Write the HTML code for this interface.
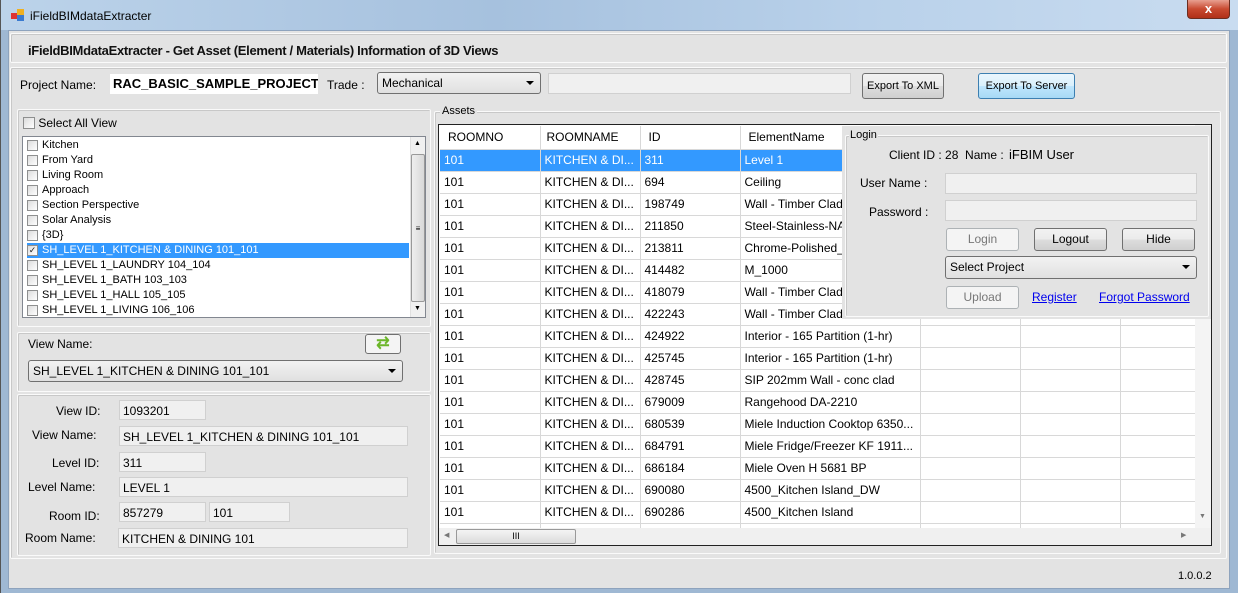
<!DOCTYPE html>
<html><head><style>
*{box-sizing:border-box;margin:0;padding:0}
body{width:1238px;height:593px;overflow:hidden;background:#9fb8d3;font-family:"Liberation Sans",sans-serif;font-size:12px;color:#000;position:relative}
.a{position:absolute}
.title{left:0;top:0;width:1238px;height:30px;background:linear-gradient(90deg,#bcd3ea,#a6c1de 40%,#b9d1ea 70%,#c9dcf0)}
.win{left:8px;top:30px;width:1222px;height:559px;background:#e3e3e3;border:1px solid #8ea3bd}
.grp{border:1px solid #fafafa;box-shadow:inset 1px 1px 0 #c8c8c8;border-radius:2px}
.tb{background:#f0f0f0;border:1px solid #d0d0d0}
.btn{background:linear-gradient(#f2f2f2,#ebebeb 50%,#dddddd 51%,#cfcfcf);border:1px solid #707070;border-radius:3px;text-align:center;font-size:11px}
.cmb{background:linear-gradient(#f2f2f2,#e0e0e0);border:1px solid #707070;border-radius:3px;padding:3px 4px;font-size:12px}
.arr{position:absolute;right:6px;top:8px;width:0;height:0;border-left:4px solid transparent;border-right:4px solid transparent;border-top:4px solid #000}
.cb{width:12px;height:12px;border:1px solid #8e8f8f;background:linear-gradient(135deg,#dcdcdc,#fff);display:inline-block}
.li{position:absolute;left:4px;height:15px;line-height:15px;font-size:11px;width:382px;padding-left:15px}
.li .cb{position:absolute;left:0;top:2px;width:11px;height:11px}
table{border-collapse:collapse;font-size:12px}
td{height:22px;border-right:1px solid #d8d8d8;border-bottom:1px solid #d8d8d8;padding-left:4px;white-space:nowrap;overflow:hidden;background:#fff}
.lbl{font-size:12px;color:#000}
</style></head><body>
<div class="a title"></div>
<div class="a" style="left:0;top:0;width:1px;height:593px;background:#555"></div>
<div class="a" style="left:11px;top:9px;width:14px;height:12px"><div class="a" style="left:0;top:4px;width:6px;height:6px;background:#d33"></div><div class="a" style="left:6px;top:0;width:7px;height:6px;background:#f0b020"></div><div class="a" style="left:6px;top:6px;width:7px;height:6px;background:#3a7ad0"></div></div>
<div class="a" style="left:30px;top:9px;font-size:12px">iFieldBIMdataExtracter</div>
<div class="a" style="left:1187px;top:0;width:43px;height:19px;background:linear-gradient(#e8a090,#c84a30 50%,#b03018);border:1px solid #6b2d20;border-top:none;border-radius:0 0 4px 4px;color:#fff;text-align:center;font-weight:bold;font-size:13px;line-height:17px">x</div>
<div class="a win"></div>
<div class="a grp" style="left:10px;top:33px;width:1217px;height:30px"></div>
<div class="a" style="left:28px;top:43px;font-size:13px;font-weight:bold;letter-spacing:-0.3px;color:#111">iFieldBIMdataExtracter - Get Asset (Element / Materials) Information of 3D Views</div>
<div class="a grp" style="left:10px;top:67px;width:1217px;height:492px"></div>
<div class="a lbl" style="left:20px;top:78px">Project Name:</div>
<div class="a" style="left:110px;top:74px;width:208px;height:20px;background:#fff;font-weight:bold;font-size:13px;padding:2px 3px;overflow:hidden;white-space:nowrap">RAC_BASIC_SAMPLE_PROJECT</div>
<div class="a lbl" style="left:327px;top:78px">Trade :</div>
<div class="a cmb" style="left:377px;top:72px;width:164px;height:22px">Mechanical<span class="arr"></span></div>
<div class="a tb" style="left:548px;top:73px;width:303px;height:21px"></div>
<div class="a btn" style="left:862px;top:73px;width:82px;height:26px;line-height:24px">Export To XML</div>
<div class="a btn" style="left:978px;top:73px;width:97px;height:26px;line-height:24px;border-color:#3c7fb1;background:linear-gradient(#eaf6fd,#d9f0fc 50%,#bee6fd 51%,#a7d9f5)">Export To Server</div>

<div class="a grp" style="left:17px;top:109px;width:414px;height:218px"></div>
<div class="a" style="left:23px;top:115px"><span class="cb" style="vertical-align:middle"></span> <span style="vertical-align:middle">Select All View</span></div>
<div class="a" style="left:22px;top:136px;width:404px;height:182px;background:#fff;border:1px solid #828790;overflow:hidden">
<div class="li" style="top:1px"><span class="cb"></span>Kitchen</div>
<div class="li" style="top:16px"><span class="cb"></span>From Yard</div>
<div class="li" style="top:31px"><span class="cb"></span>Living Room</div>
<div class="li" style="top:46px"><span class="cb"></span>Approach</div>
<div class="li" style="top:61px"><span class="cb"></span>Section Perspective</div>
<div class="li" style="top:76px"><span class="cb"></span>Solar Analysis</div>
<div class="li" style="top:91px"><span class="cb"></span>{3D}</div>
<div class="li" style="top:106px;background:#3399ff;color:#fff"><span class="cb" style="font-size:9px;color:#222;line-height:9px;text-align:center">✓</span>SH_LEVEL 1_KITCHEN &amp; DINING 101_101</div>
<div class="li" style="top:121px"><span class="cb"></span>SH_LEVEL 1_LAUNDRY 104_104</div>
<div class="li" style="top:136px"><span class="cb"></span>SH_LEVEL 1_BATH 103_103</div>
<div class="li" style="top:151px"><span class="cb"></span>SH_LEVEL 1_HALL 105_105</div>
<div class="li" style="top:166px"><span class="cb"></span>SH_LEVEL 1_LIVING 106_106</div>
<div class="a" style="left:387px;top:0;width:16px;height:180px;background:#f0f0f0;border-left:1px solid #e0e0e0"></div>
<div class="a" style="left:388px;top:17px;width:14px;height:148px;background:linear-gradient(90deg,#eee,#d8d8d8);border:1px solid #999;border-radius:2px;text-align:center;font-size:8px;line-height:148px">≡</div>
<div class="a" style="left:391px;top:3px;font-size:7px">▲</div><div class="a" style="left:391px;top:168px;font-size:7px">▼</div>
</div>

<div class="a grp" style="left:17px;top:332px;width:414px;height:60px"></div>
<div class="a lbl" style="left:28px;top:337px">View Name:</div>
<div class="a btn" style="left:365px;top:334px;width:36px;height:20px;background:#f4f4f4;color:#6cb62a;font-size:16px;line-height:17px;font-weight:bold">⇄</div>
<div class="a cmb" style="left:28px;top:360px;width:375px;height:22px">SH_LEVEL 1_KITCHEN &amp; DINING 101_101<span class="arr"></span></div>

<div class="a grp" style="left:17px;top:394px;width:414px;height:162px"></div>
<div class="a lbl" style="left:56px;top:404px">View ID:</div>
<div class="a tb" style="left:119px;top:400px;width:87px;height:20px;padding:3px 3px">1093201</div>
<div class="a lbl" style="left:32px;top:428px">View Name:</div>
<div class="a tb" style="left:119px;top:426px;width:289px;height:20px;padding:3px 3px">SH_LEVEL 1_KITCHEN &amp; DINING 101_101</div>
<div class="a lbl" style="left:52px;top:456px">Level ID:</div>
<div class="a tb" style="left:119px;top:452px;width:87px;height:20px;padding:3px 3px">311</div>
<div class="a lbl" style="left:28px;top:480px">Level Name:</div>
<div class="a tb" style="left:119px;top:477px;width:289px;height:20px;padding:3px 3px">LEVEL 1</div>
<div class="a lbl" style="left:49px;top:509px">Room ID:</div>
<div class="a tb" style="left:119px;top:502px;width:87px;height:20px;padding:3px 3px">857279</div>
<div class="a tb" style="left:209px;top:502px;width:81px;height:20px;padding:3px 3px">101</div>
<div class="a lbl" style="left:25px;top:531px">Room Name:</div>
<div class="a tb" style="left:118px;top:528px;width:290px;height:20px;padding:3px 3px">KITCHEN &amp; DINING 101</div>

<div class="a grp" style="left:434px;top:111px;width:787px;height:443px"></div>
<div class="a" style="left:440px;top:105px;background:#e3e3e3;padding:0 2px;font-size:11px">Assets</div>
<div class="a" style="left:438px;top:124px;width:774px;height:422px;border:1px solid #222;background:#fff;overflow:hidden">
<table style="position:absolute;left:1px;top:1px;width:756px;table-layout:fixed">
<colgroup><col style="width:100px"><col style="width:100px"><col style="width:100px"><col style="width:180px"><col style="width:100px"><col style="width:100px"><col style="width:76px"></colgroup>
<tr><td style="height:23px;padding-left:8px">ROOMNO</td><td style="padding-left:6px">ROOMNAME</td><td style="padding-left:8px">ID</td><td style="padding-left:8px">ElementName</td><td></td><td></td><td></td></tr>
<tr style="color:#fff"><td style="background:#3399ff">101</td><td style="background:#3399ff">KITCHEN &amp; DI...</td><td style="background:#3399ff">311</td><td style="background:#3399ff">Level 1</td><td></td><td></td><td></td></tr>
<tr><td>101</td><td>KITCHEN &amp; DI...</td><td>694</td><td>Ceiling</td><td></td><td></td><td></td></tr>
<tr><td>101</td><td>KITCHEN &amp; DI...</td><td>198749</td><td>Wall - Timber Clad</td><td></td><td></td><td></td></tr>
<tr><td>101</td><td>KITCHEN &amp; DI...</td><td>211850</td><td>Steel-Stainless-NA</td><td></td><td></td><td></td></tr>
<tr><td>101</td><td>KITCHEN &amp; DI...</td><td>213811</td><td>Chrome-Polished_</td><td></td><td></td><td></td></tr>
<tr><td>101</td><td>KITCHEN &amp; DI...</td><td>414482</td><td>M_1000</td><td></td><td></td><td></td></tr>
<tr><td>101</td><td>KITCHEN &amp; DI...</td><td>418079</td><td>Wall - Timber Clad</td><td></td><td></td><td></td></tr>
<tr><td>101</td><td>KITCHEN &amp; DI...</td><td>422243</td><td>Wall - Timber Clad</td><td></td><td></td><td></td></tr>
<tr><td>101</td><td>KITCHEN &amp; DI...</td><td>424922</td><td>Interior - 165 Partition (1-hr)</td><td></td><td></td><td></td></tr>
<tr><td>101</td><td>KITCHEN &amp; DI...</td><td>425745</td><td>Interior - 165 Partition (1-hr)</td><td></td><td></td><td></td></tr>
<tr><td>101</td><td>KITCHEN &amp; DI...</td><td>428745</td><td>SIP 202mm Wall - conc clad</td><td></td><td></td><td></td></tr>
<tr><td>101</td><td>KITCHEN &amp; DI...</td><td>679009</td><td>Rangehood DA-2210</td><td></td><td></td><td></td></tr>
<tr><td>101</td><td>KITCHEN &amp; DI...</td><td>680539</td><td>Miele Induction Cooktop 6350...</td><td></td><td></td><td></td></tr>
<tr><td>101</td><td>KITCHEN &amp; DI...</td><td>684791</td><td>Miele Fridge/Freezer KF 1911...</td><td></td><td></td><td></td></tr>
<tr><td>101</td><td>KITCHEN &amp; DI...</td><td>686184</td><td>Miele Oven H 5681 BP</td><td></td><td></td><td></td></tr>
<tr><td>101</td><td>KITCHEN &amp; DI...</td><td>690080</td><td>4500_Kitchen Island_DW</td><td></td><td></td><td></td></tr>
<tr><td>101</td><td>KITCHEN &amp; DI...</td><td>690286</td><td>4500_Kitchen Island</td><td></td><td></td><td></td></tr>
<tr><td></td><td></td><td></td><td></td><td></td><td></td><td></td></tr>
</table>
<div class="a" style="left:756px;top:0;width:17px;height:420px;background:#f4f4f4"></div>
<div class="a" style="left:760px;top:388px;font-size:7px;color:#777">▼</div>
<div class="a" style="left:0;top:403px;width:773px;height:17px;background:#f0f0f0"></div>
<div class="a" style="left:17px;top:404px;width:120px;height:15px;background:linear-gradient(#f4f4f4,#dcdcdc);border:1px solid #999;border-radius:2px;text-align:center;font-size:9px;line-height:13px">III</div>
<div class="a" style="left:5px;top:406px;font-size:7px;color:#777">◀</div>
<div class="a" style="left:742px;top:406px;font-size:7px;color:#777">▶</div>
</div>

<div class="a" style="left:842px;top:126px;width:369px;height:193px;background:#e3e3e3"></div>
<div class="a grp" style="left:845px;top:135px;width:364px;height:182px"></div>
<div class="a" style="left:849px;top:129px;background:#e3e3e3;padding:0 1px;font-size:11px">Login</div>
<div class="a lbl" style="left:889px;top:148px">Client ID : 28&nbsp; Name :</div>
<div class="a" style="left:1009px;top:147px;font-size:13px">iFBIM User</div>
<div class="a lbl" style="left:860px;top:176px">User Name :</div>
<div class="a tb" style="left:945px;top:173px;width:252px;height:21px"></div>
<div class="a lbl" style="left:869px;top:205px">Password :</div>
<div class="a tb" style="left:945px;top:200px;width:252px;height:21px"></div>
<div class="a btn" style="left:946px;top:228px;width:73px;height:23px;line-height:21px;font-size:12px;color:#777;background:#f4f4f4;border-color:#adb2b5">Login</div>
<div class="a btn" style="left:1034px;top:228px;width:73px;height:23px;line-height:21px;font-size:12px">Logout</div>
<div class="a btn" style="left:1122px;top:228px;width:73px;height:23px;line-height:21px;font-size:12px">Hide</div>
<div class="a cmb" style="left:945px;top:256px;width:252px;height:23px">Select Project<span class="arr"></span></div>
<div class="a btn" style="left:946px;top:286px;width:73px;height:23px;line-height:21px;font-size:12px;color:#777;background:#f4f4f4;border-color:#adb2b5">Upload</div>
<div class="a" style="left:1032px;top:290px;color:#0000ee;text-decoration:underline;font-size:12px">Register</div>
<div class="a" style="left:1099px;top:290px;color:#0000ee;text-decoration:underline;font-size:12px">Forgot Password</div>

<div class="a" style="left:1178px;top:570px;font-size:11px">1.0.0.2</div>
</body></html>
